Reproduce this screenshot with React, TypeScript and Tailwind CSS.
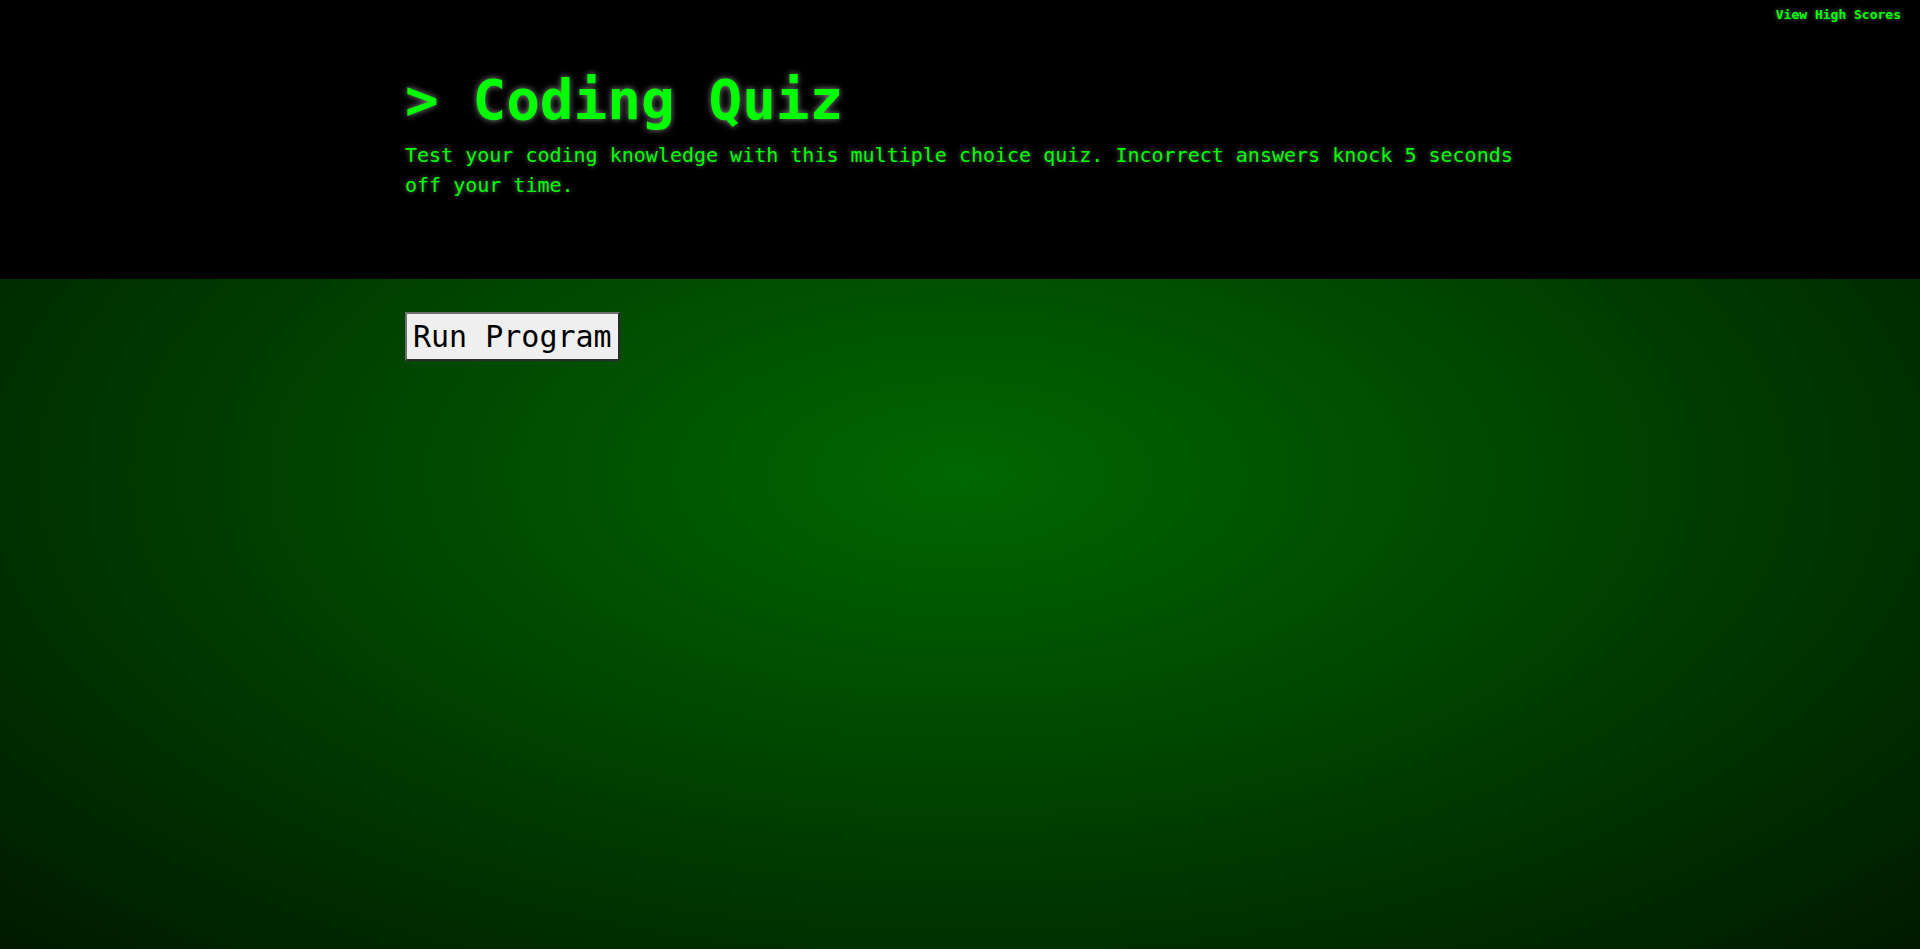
import React from "react";

export default function App() {
  return (
    <div className="min-h-screen bg-[radial-gradient(#006700,#001a00)] font-['DejaVu_Sans_Mono',monospace] text-[#00ff00]">
      <header className="h-[279px] bg-black">
        <div className="flex justify-end pr-[19px] pt-[7px]">
          <a
            href="#"
            className="text-[13px] leading-[15px] font-bold text-[#00ff00] [text-shadow:0_0_4px_rgba(255,255,255,0.45)]"
          >
            View High Scores
          </a>
        </div>
        <div className="mx-auto max-w-[1140px] px-[15px]">
          <h1 className="mt-[44px] text-[56px] leading-[67px] font-bold [text-shadow:0_0_6px_rgba(255,255,255,0.55)]">
            &gt; Coding Quiz
          </h1>
          <p className="mt-[7px] text-[20px] leading-[30px] [text-shadow:0_0_5px_rgba(255,255,255,0.45)]">
            Test your coding knowledge with this multiple choice quiz. Incorrect answers knock 5 seconds off your time.
          </p>
        </div>
      </header>
      <main className="mx-auto max-w-[1140px] px-[15px] pt-[33px]">
        <button
          type="button"
          className="border-2 border-t-[#707070] border-l-[#707070] border-r-[#2a2a2a] border-b-[#2a2a2a] bg-[#efefef] px-[6px] py-[5px] text-[30px] leading-[35px] text-black font-['DejaVu_Sans_Mono',monospace]"
        >
          Run Program
        </button>
      </main>
    </div>
  );
}
